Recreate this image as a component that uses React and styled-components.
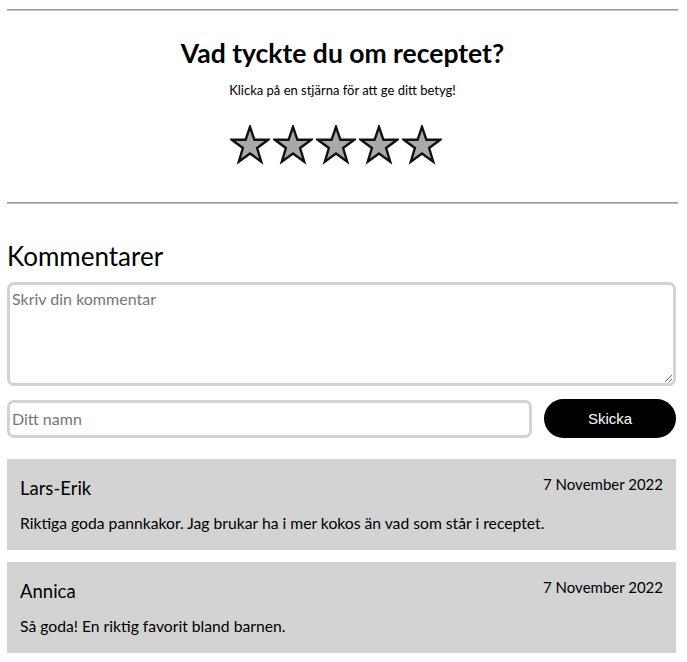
import React from 'react'
import styled, { createGlobalStyle } from 'styled-components'

const GlobalStyle = createGlobalStyle`
  body {
    margin: 0;
    background: #fff;
    font-family: 'Segoe UI', Lato, 'Noto Sans', sans-serif;
    color: #000;
  }
`

const Page = styled.div`
  padding: 9px 9px 0 7px;
`

const Divider = styled.hr`
  margin: 0;
  border: none;
  border-top: 1px solid #9a9a9a;
  border-bottom: 1px solid #c4c4c4;
`

const Rating = styled.section`
  display: flex;
  flex-direction: column;
  align-items: center;
  padding: 25px 0 37px;
`

const Title = styled.h2`
  margin: 0;
  font-size: 26.5px;
  font-weight: 700;
  line-height: 34px;
`

const Hint = styled.p`
  margin: 11px 0 0;
  font-size: 13px;
  line-height: 18px;
`

const Stars = styled.div`
  display: flex;
  gap: 3px;
  margin-top: 26px;
  padding-right: 14px;
`

const StarButton = styled.button`
  border: none;
  background: none;
  padding: 0;
  width: 40px;
  height: 40px;
  cursor: pointer;
  display: block;
`

const Star = () => (
  <svg width="40" height="40" viewBox="0 0 40 40">
    <polygon
      points="20,1.8 24.4,14.8 38.2,14.8 27.1,23 31.2,36.6 20,28.5 8.8,36.6 12.9,23 1.8,14.8 15.6,14.8"
      fill="#a9a9a9"
      stroke="#111"
      strokeWidth="2.4"
      strokeLinejoin="miter"
    />
  </svg>
)

const Comments = styled.section`
  padding-top: 35px;
`

const Heading = styled.h3`
  margin: 0 0 9px;
  font-size: 26px;
  font-weight: 400;
  line-height: 34px;
`

const Form = styled.form`
  display: flex;
  flex-direction: column;
  gap: 13px;
  margin-right: 2px;
`

const TextArea = styled.textarea`
  display: block;
  box-sizing: border-box;
  width: 100%;
  height: 104px;
  border: 3px solid #d3d3d3;
  border-radius: 7px;
  padding: 4px 2px;
  font-family: inherit;
  font-size: 16px;
  outline: none;
  resize: vertical;
  &::placeholder {
    color: #757575;
  }
`

const FormRow = styled.div`
  display: flex;
  align-items: center;
  gap: 12px;
`

const NameInput = styled.input`
  box-sizing: border-box;
  flex: 1;
  height: 38px;
  border: 3px solid #d3d3d3;
  border-radius: 7px;
  padding: 0 2px;
  font-family: inherit;
  font-size: 16px;
  outline: none;
  &::placeholder {
    color: #757575;
  }
`

const SendButton = styled.button`
  width: 132px;
  height: 39px;
  border: none;
  border-radius: 20px;
  background: #000;
  color: #fff;
  font-family: Arial, 'Liberation Sans', sans-serif;
  font-size: 15px;
  cursor: pointer;
`

const List = styled.div`
  display: flex;
  flex-direction: column;
  gap: 12px;
  margin-top: 21px;
  margin-right: 2px;
`

const Card = styled.article`
  background: #d3d3d3;
  padding: 14px 13px 17px;
`

const CardHead = styled.div`
  display: flex;
  justify-content: space-between;
  align-items: flex-start;
`

const Name = styled.span`
  font-size: 18.5px;
  line-height: 28px;
  margin-top: 1px;
`

const Date = styled.span`
  font-size: 15px;
  line-height: 22px;
`

const Body = styled.p`
  margin: 11px 0 0;
  font-size: 15.7px;
  line-height: 20px;
`

const comments = [
  {
    name: 'Lars-Erik',
    date: '7 November 2022',
    text: 'Riktiga goda pannkakor. Jag brukar ha i mer kokos än vad som står i receptet.',
  },
  {
    name: 'Annica',
    date: '7 November 2022',
    text: 'Så goda! En riktig favorit bland barnen.',
  },
]

export default function App() {
  return (
    <>
      <GlobalStyle />
      <Page>
        <Divider />
        <Rating>
          <Title>Vad tyckte du om receptet?</Title>
          <Hint>Klicka på en stjärna för att ge ditt betyg!</Hint>
          <Stars>
            {[1, 2, 3, 4, 5].map((n) => (
              <StarButton key={n} aria-label={`${n} stjärnor`}>
                <Star />
              </StarButton>
            ))}
          </Stars>
        </Rating>
        <Divider />
        <Comments>
          <Heading>Kommentarer</Heading>
          <Form onSubmit={(e) => e.preventDefault()}>
            <TextArea placeholder="Skriv din kommentar" />
            <FormRow>
              <NameInput placeholder="Ditt namn" />
              <SendButton type="submit">Skicka</SendButton>
            </FormRow>
          </Form>
          <List>
            {comments.map((c) => (
              <Card key={c.name}>
                <CardHead>
                  <Name>{c.name}</Name>
                  <Date>{c.date}</Date>
                </CardHead>
                <Body>{c.text}</Body>
              </Card>
            ))}
          </List>
        </Comments>
      </Page>
    </>
  )
}
